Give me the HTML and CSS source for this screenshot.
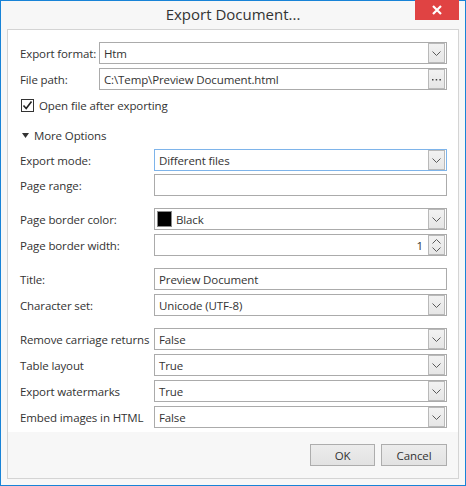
FILE: index.html
```html
<!DOCTYPE html>
<html>
<head>
<meta charset="utf-8">
<link rel="stylesheet" href="styles.css">
</head>
<body>
<div class="window">
  <div class="titlebar">
    <div></div>
    <div class="title">Export Document...</div>
    <div class="close"><svg width="10" height="10" viewBox="0 0 10 10"><path d="M1 1L9 9M9 1L1 9" stroke="#fff" stroke-width="2.2"/></svg></div>
  </div>
  <div class="panel">
    <div class="content">
      <div class="row r1">
        <span class="lbl short">Export format:</span>
        <div class="field"><span class="val">Htm</span><span class="btn"><svg width="9" height="5" viewBox="0 0 9 5"><path d="M0.5 0.5L4.5 4.5L8.5 0.5" fill="none" stroke="#5a5a5a"/></svg></span></div>
      </div>
      <div class="row r2">
        <span class="lbl short">File path:</span>
        <div class="field"><span class="val">C:\Temp\Preview Document.html</span><span class="btn"><svg width="9" height="3" viewBox="0 0 9 3"><rect x="0" y="1" width="1.5" height="1.5" fill="#444"/><rect x="3.7" y="1" width="1.5" height="1.5" fill="#444"/><rect x="7.4" y="1" width="1.5" height="1.5" fill="#444"/></svg></span></div>
      </div>
      <div class="check-row">
        <span class="checkbox"><svg width="11" height="11" viewBox="0 0 11 11"><path d="M1.5 5.5L4.2 8.5L9.5 1.5" fill="none" stroke="#222" stroke-width="1.6"/></svg></span>
        <span class="check-text">Open file after exporting</span>
      </div>
      <div class="more">
        <svg class="tri" width="7" height="5" viewBox="0 0 7 5"><path d="M0 0H7L3.5 5Z" fill="#333"/></svg>
        <span>More Options</span>
      </div>
      <div class="row mode">
        <span class="lbl">Export mode:</span>
        <div class="field focus"><span class="val">Different files</span><span class="btn"><svg width="9" height="5" viewBox="0 0 9 5"><path d="M0.5 0.5L4.5 4.5L8.5 0.5" fill="none" stroke="#5a5a5a"/></svg></span></div>
      </div>
      <div class="row range">
        <span class="lbl">Page range:</span>
        <div class="field"></div>
      </div>
      <div class="row group">
        <span class="lbl">Page border color:</span>
        <div class="field"><span class="swatch"></span><span class="val">Black</span><span class="btn"><svg width="9" height="5" viewBox="0 0 9 5"><path d="M0.5 0.5L4.5 4.5L8.5 0.5" fill="none" stroke="#5a5a5a"/></svg></span></div>
      </div>
      <div class="row">
        <span class="lbl">Page border width:</span>
        <div class="field"><span class="num">1</span><span class="btn spin"><svg width="9" height="5" viewBox="0 0 9 5"><path d="M0.5 4.5L4.5 0.5L8.5 4.5" fill="none" stroke="#5a5a5a"/></svg><svg width="9" height="5" viewBox="0 0 9 5"><path d="M0.5 0.5L4.5 4.5L8.5 0.5" fill="none" stroke="#5a5a5a"/></svg></span></div>
      </div>
      <div class="row group">
        <span class="lbl">Title:</span>
        <div class="field"><span class="val">Preview Document</span></div>
      </div>
      <div class="row">
        <span class="lbl">Character set:</span>
        <div class="field"><span class="val">Unicode (UTF-8)</span><span class="btn"><svg width="9" height="5" viewBox="0 0 9 5"><path d="M0.5 0.5L4.5 4.5L8.5 0.5" fill="none" stroke="#5a5a5a"/></svg></span></div>
      </div>
      <div class="row group">
        <span class="lbl">Remove carriage returns</span>
        <div class="field"><span class="val">False</span><span class="btn"><svg width="9" height="5" viewBox="0 0 9 5"><path d="M0.5 0.5L4.5 4.5L8.5 0.5" fill="none" stroke="#5a5a5a"/></svg></span></div>
      </div>
      <div class="row">
        <span class="lbl">Table layout</span>
        <div class="field"><span class="val">True</span><span class="btn"><svg width="9" height="5" viewBox="0 0 9 5"><path d="M0.5 0.5L4.5 4.5L8.5 0.5" fill="none" stroke="#5a5a5a"/></svg></span></div>
      </div>
      <div class="row">
        <span class="lbl">Export watermarks</span>
        <div class="field"><span class="val">True</span><span class="btn"><svg width="9" height="5" viewBox="0 0 9 5"><path d="M0.5 0.5L4.5 4.5L8.5 0.5" fill="none" stroke="#5a5a5a"/></svg></span></div>
      </div>
      <div class="row">
        <span class="lbl">Embed images in HTML</span>
        <div class="field"><span class="val">False</span><span class="btn"><svg width="9" height="5" viewBox="0 0 9 5"><path d="M0.5 0.5L4.5 4.5L8.5 0.5" fill="none" stroke="#5a5a5a"/></svg></span></div>
      </div>
    </div>
    <div class="footer">
      <button class="b ok">OK</button>
      <button class="b cancel">Cancel</button>
    </div>
  </div>
</div>
</body>
</html>
```

FILE: styles.css
```css
* { box-sizing: border-box; }
html, body { margin: 0; padding: 0; }
body {
  font-family: "Open Sans", "Noto Sans", sans-serif;
  font-size: 11.5px;
  letter-spacing: -0.12px;
  color: #333;
}
.window {
  width: 466px;
  height: 486px;
  border: 1px solid #1883d7;
  background: #f7f7f7;
  display: flex;
  flex-direction: column;
}
.titlebar {
  height: 28px;
  display: grid;
  grid-template-columns: 1fr auto 1fr;
  flex: none;
}
.title {
  font-size: 15px;
  letter-spacing: 0;
  line-height: 27px;
  color: #333;
}
.close {
  justify-self: end;
  align-self: start;
  width: 44px;
  height: 20px;
  margin-right: 6px;
  margin-top: -1px;
  background: #e04343;
  display: flex;
  align-items: center;
  justify-content: center;
}
.panel {
  flex: 1;
  margin: 0 6px 6px 6px;
  border: 1px solid #d4d4d4;
  display: flex;
  flex-direction: column;
}
.content {
  flex: 1;
  background: #fff;
  padding: 12px 11px 0 12px;
  display: flex;
  flex-direction: column;
}
.row {
  display: flex;
  align-items: center;
  height: 22px;
  margin-top: 4px;
  flex: none;
}
.row.r1 { margin-top: 0; }
.row.mode { margin-top: 6px; }
.row.range { margin-top: 3px; }
.row.group { margin-top: 12px; }
.lbl {
  width: 134px;
  flex: none;
  white-space: nowrap;
}
.lbl.short { width: 79px; }
.field {
  flex: 1;
  height: 22px;
  border: 1px solid #ababab;
  display: flex;
  align-items: center;
  padding-left: 4px;
  background: #fff;
}
.field.focus { border-color: #7eb4ea; }
.val { white-space: nowrap; }
.btn {
  margin-left: auto;
  margin-right: 1px;
  width: 17px;
  height: 20px;
  border: 1px solid #b9b9b9;
  background: linear-gradient(#f2f2f2, #e6e6e6);
  display: flex;
  align-items: center;
  justify-content: center;
  flex: none;
}
.btn.spin {
  flex-direction: column;
  gap: 3px;
}
.num {
  margin-left: auto;
  margin-right: 5px;
}
.num + .btn { margin-left: 0; }
.swatch {
  width: 15px;
  height: 16px;
  background: #000;
  border: 1px solid #8a8a8a;
  margin-left: -2px;
  margin-right: 4px;
  flex: none;
}
.check-row {
  margin-top: 8px;
  height: 14px;
  display: flex;
  align-items: center;
  flex: none;
}
.checkbox {
  width: 13px;
  height: 13px;
  border: 1px solid #333;
  margin-left: 1px;
  margin-right: 5px;
  display: flex;
  align-items: center;
  justify-content: center;
  background: #fff;
}
.more {
  margin-top: 15px;
  height: 16px;
  display: flex;
  align-items: center;
  flex: none;
}
.tri {
  margin-left: 2px;
  margin-right: 5px;
}
.footer {
  height: 46px;
  flex: none;
  display: flex;
  justify-content: flex-end;
  align-items: flex-start;
  gap: 6px;
  padding: 12px 11px 0 0;
  background: #f7f7f7;
}
.b {
  height: 22px;
  border: 1px solid #adadad;
  background: linear-gradient(#ececec, #e2e2e2);
  font-family: "Open Sans", "Noto Sans", sans-serif;
  font-size: 11.5px;
  letter-spacing: -0.12px;
  color: #333;
  padding: 0;
}
.b.ok { width: 65px; }
.b.cancel { width: 66px; }
```
